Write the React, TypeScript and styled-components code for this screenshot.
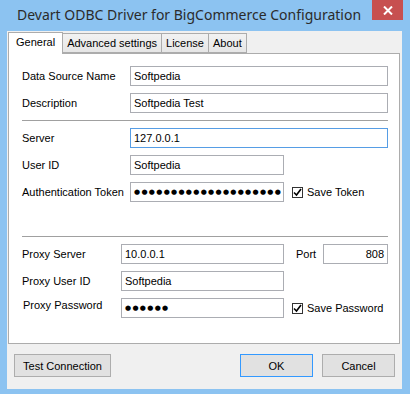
import styled, { createGlobalStyle } from 'styled-components';

const GlobalStyle = createGlobalStyle`
  html, body {
    margin: 0;
    padding: 0;
    background: #8cc3f1;
  }
  * {
    box-sizing: border-box;
  }
`;

const Frame = styled.div`
  width: 410px;
  height: 394px;
  display: flex;
  flex-direction: column;
  padding: 0 8px 5px 7px;
  background: #8cc3f1;
  font-family: 'Liberation Sans', Arial, sans-serif;
  font-size: 11px;
  color: #000;
`;

const TitleBar = styled.div`
  height: 31px;
  display: flex;
  align-items: flex-start;
`;

const Title = styled.div`
  flex: 1;
  padding: 5px 0 0 10px;
  font-family: 'Noto Sans', 'Open Sans', sans-serif;
  font-size: 14px;
  color: #2b2b2b;
  white-space: nowrap;
`;

const CloseButton = styled.div`
  width: 31px;
  height: 20px;
  margin-right: -1px;
  background: #c75050;
  display: flex;
  align-items: center;
  justify-content: center;
`;

const Client = styled.div`
  flex: 1;
  display: flex;
  flex-direction: column;
  background: #f0f0f0;
  padding: 1px 2px 0 1px;
`;

const TabStrip = styled.div`
  height: 21px;
  display: flex;
  align-items: flex-end;
  position: relative;
  z-index: 1;
`;

const Tab = styled.div<{ $active?: boolean }>`
  height: ${(p) => (p.$active ? '22px' : '20px')};
  margin-bottom: ${(p) => (p.$active ? '-1px' : '0')};
  padding: ${(p) => (p.$active ? '3px 7px 0 7px' : '3px 4px 0 4px')};
  border: 1px solid #acacac;
  border-bottom: ${(p) => (p.$active ? 'none' : '1px solid #acacac')};
  border-left: ${(p) => (p.$active ? '1px solid #acacac' : 'none')};
  background: ${(p) => (p.$active ? '#fff' : 'linear-gradient(#f2f2f2, #e6e6e6)')};
  white-space: nowrap;
`;

const Panel = styled.div`
  height: 291px;
  background: #fff;
  border: 1px solid #acacac;
  padding: 12px 11px 0 13px;
  display: flex;
  flex-direction: column;
`;

const Row = styled.div<{ $gap?: number }>`
  display: flex;
  align-items: center;
  height: 20px;
  margin-bottom: ${(p) => p.$gap ?? 7}px;
`;

const Label = styled.div<{ $width: number; $raised?: boolean }>`
  width: ${(p) => p.$width}px;
  flex: none;
  white-space: nowrap;
  align-self: ${(p) => (p.$raised ? 'flex-start' : 'center')};
  padding-left: ${(p) => (p.$raised ? '1px' : '0')};
  margin-top: ${(p) => (p.$raised ? '1px' : '0')};
`;

const Field = styled.div<{ $width: number; $focused?: boolean; $right?: boolean }>`
  width: ${(p) => p.$width}px;
  height: 20px;
  flex: none;
  border: 1px solid ${(p) => (p.$focused ? '#569de5' : '#abadb3')};
  background: #fff;
  padding: 0 3px;
  display: flex;
  align-items: center;
  justify-content: ${(p) => (p.$right ? 'flex-end' : 'flex-start')};
  overflow: hidden;
  white-space: nowrap;
`;

const Dots = styled.span`
  font-family: 'DejaVu Sans', sans-serif;
  font-size: 7px;
  letter-spacing: 1.3px;
  white-space: nowrap;
`;

const Separator = styled.div<{ $top: number }>`
  height: 1px;
  width: 366px;
  background: #a0a0a0;
  margin: ${(p) => p.$top}px 0 7px 0;
`;

const CheckWrap = styled.div`
  display: flex;
  align-items: center;
  margin-left: 8px;
  gap: 4px;
  white-space: nowrap;
`;

const Box = styled.div`
  width: 11px;
  height: 11px;
  border: 1px solid #333;
  background: #fff;
  display: flex;
  align-items: center;
  justify-content: center;
  margin-top: 1px;
`;

const PortLabel = styled.div`
  margin: 0 8px 0 12px;
  width: 19px;
`;

const ButtonRow = styled.div`
  display: flex;
  align-items: center;
  margin-top: 10px;
  padding: 0 5px 0 6px;
  gap: 9px;
`;

const Button = styled.div<{ $default?: boolean; $width: number }>`
  width: ${(p) => p.$width}px;
  height: 23px;
  border: 1px solid ${(p) => (p.$default ? '#3399ff' : '#adadad')};
  background: #e1e1e1;
  display: flex;
  align-items: center;
  justify-content: center;
  white-space: nowrap;
`;

const Spacer = styled.div`
  flex: 1;
`;

function Check() {
  return (
    <Box>
      <svg width="9" height="9" viewBox="0 0 9 9">
        <path d="M1 4.5 L3.5 7 L8 1" fill="none" stroke="#000" strokeWidth="1.6" />
      </svg>
    </Box>
  );
}

export default function App() {
  return (
    <>
      <GlobalStyle />
      <Frame>
        <TitleBar>
          <Title>Devart ODBC Driver for BigCommerce Configuration</Title>
          <CloseButton>
            <svg width="10" height="9" viewBox="0 0 10 9">
              <path d="M1 0.5 L9 8.5 M9 0.5 L1 8.5" stroke="#fff" strokeWidth="2" />
            </svg>
          </CloseButton>
        </TitleBar>
        <Client>
          <TabStrip>
            <Tab $active>General</Tab>
            <Tab>Advanced settings</Tab>
            <Tab>License</Tab>
            <Tab>About</Tab>
          </TabStrip>
          <Panel>
            <Row>
              <Label $width={108}>Data Source Name</Label>
              <Field $width={258}>Softpedia</Field>
            </Row>
            <Row $gap={0}>
              <Label $width={108}>Description</Label>
              <Field $width={258}>Softpedia Test</Field>
            </Row>
            <Separator $top={7} />
            <Row>
              <Label $width={108}>Server</Label>
              <Field $width={258} $focused>127.0.0.1</Field>
            </Row>
            <Row>
              <Label $width={108}>User ID</Label>
              <Field $width={154}>Softpedia</Field>
            </Row>
            <Row $gap={0}>
              <Label $width={108}>Authentication Token</Label>
              <Field $width={154}>
                <Dots>●●●●●●●●●●●●●●●●●●●●</Dots>
              </Field>
              <CheckWrap>
                <Check />
                Save Token
              </CheckWrap>
            </Row>
            <Separator $top={34} />
            <Row>
              <Label $width={99}>Proxy Server</Label>
              <Field $width={163}>10.0.0.1</Field>
              <PortLabel>Port</PortLabel>
              <Field $width={65} $right>808</Field>
            </Row>
            <Row>
              <Label $width={99}>Proxy User ID</Label>
              <Field $width={163}>Softpedia</Field>
            </Row>
            <Row>
              <Label $width={99} $raised>Proxy Password</Label>
              <Field $width={163}>
                <Dots>●●●●●●</Dots>
              </Field>
              <CheckWrap>
                <Check />
                Save Password
              </CheckWrap>
            </Row>
          </Panel>
          <ButtonRow>
            <Button $width={97}>Test Connection</Button>
            <Spacer />
            <Button $width={73} $default>OK</Button>
            <Button $width={73}>Cancel</Button>
          </ButtonRow>
        </Client>
      </Frame>
    </>
  );
}
